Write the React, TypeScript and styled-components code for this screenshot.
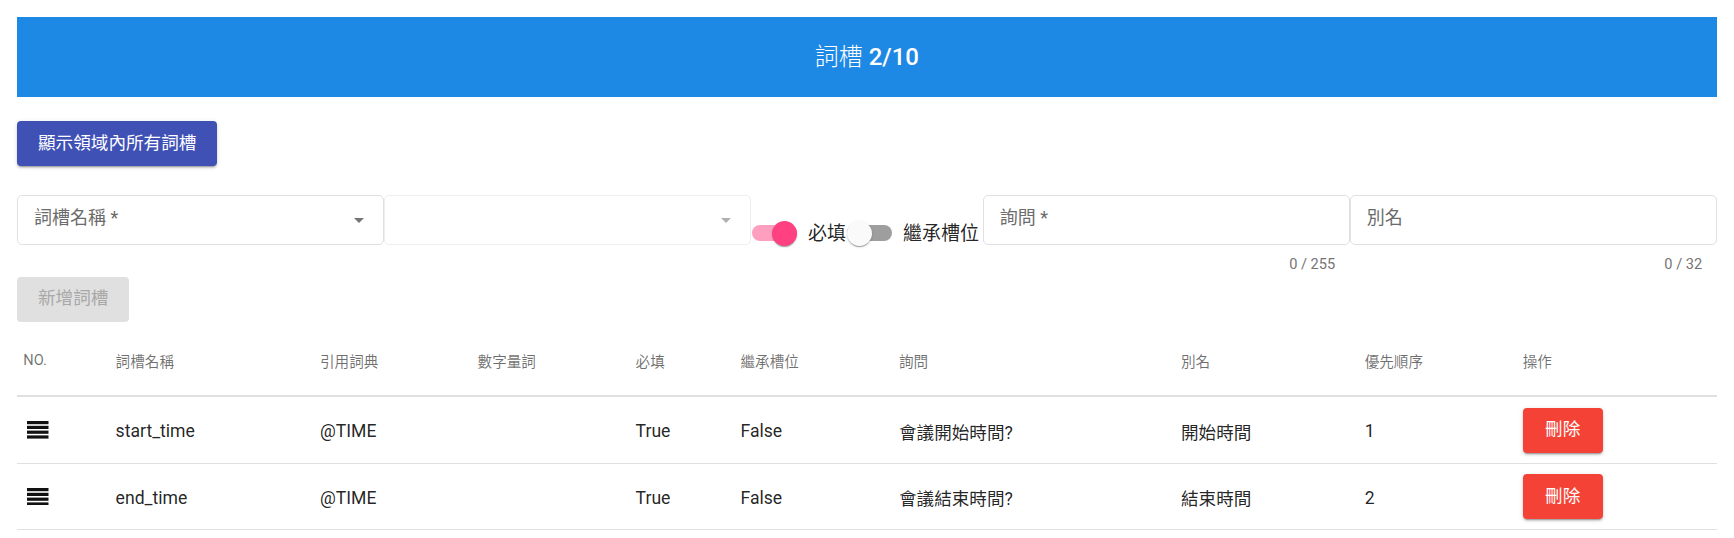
import React from "react";
import styled, { createGlobalStyle } from "styled-components";

const GlobalStyle = createGlobalStyle`
  html, body { margin: 0; padding: 0; background: #fff; }
  body {
    font-family: Roboto, "Noto Sans CJK TC", sans-serif;
    color: rgba(0, 0, 0, 0.87);
    -webkit-font-smoothing: antialiased;
  }
  * { box-sizing: border-box; }
`;

const Page = styled.div`
  padding: 17px 17.3px 0 17px;
`;

const TitleBar = styled.header`
  height: 80px;
  background: #1e88e5;
  color: #fff;
  display: flex;
  align-items: center;
  justify-content: center;
  font-size: 24px;
  line-height: 1;
`;

const TitleText = styled.h1`
  margin: 0;
  font-size: inherit;
  font-weight: 300;
  white-space: pre;
`;

const TitleCount = styled.span`
  font-weight: 500;
`;

const ActionsRow = styled.div`
  display: flex;
  margin-top: 24px;
`;

type Tone = "primary" | "danger" | "disabled";

const Button = styled.button<{ $tone: Tone }>`
  height: 45px;
  padding: 0 ${(p) => (p.$tone === "danger" ? "22.4px" : "21px")};
  border: none;
  border-radius: 4px;
  font-family: inherit;
  font-size: 17.6px;
  line-height: 1;
  display: inline-flex;
  align-items: center;
  justify-content: center;
  flex: none;
  cursor: ${(p) => (p.$tone === "disabled" ? "default" : "pointer")};
  background: ${(p) =>
    p.$tone === "primary" ? "#3f51b5" : p.$tone === "danger" ? "#f44336" : "#e0e0e0"};
  color: ${(p) => (p.$tone === "disabled" ? "#a8a8a8" : "#fff")};
  box-shadow: ${(p) =>
    p.$tone === "disabled"
      ? "none"
      : "0 3px 1px -2px rgba(0,0,0,.2), 0 2px 2px 0 rgba(0,0,0,.14), 0 1px 5px 0 rgba(0,0,0,.12)"};
`;

const FormRow = styled.div`
  display: flex;
  align-items: flex-start;
  margin-top: 29px;
`;

const FieldWrap = styled.div`
  width: 367px;
  flex: none;
  display: flex;
  flex-direction: column;
`;

const FieldBox = styled.div<{ $muted?: boolean }>`
  height: 49.5px;
  border: 1px solid ${(p) => (p.$muted ? "#eeeeee" : "#e0e0e0")};
  border-radius: 5px;
  display: flex;
  align-items: flex-start;
  padding: 9.5px 0 0 16px;
  background: #fff;
`;

const FieldLabel = styled.span`
  flex: 1;
  font-size: 18px;
  line-height: 24px;
  color: #6b6b6b;
`;

const ArrowIcon = styled.svg<{ $muted?: boolean }>`
  width: 10px;
  height: 5px;
  margin: 12px 18.7px 0 0;
  flex: none;
  fill: ${(p) => (p.$muted ? "#b0b0b0" : "#757575")};
`;

const Counter = styled.div`
  margin-top: 10px;
  font-size: 14.6px;
  line-height: 18px;
  text-align: right;
  padding-right: 14.5px;
  color: #757575;
`;

const SwitchGroup = styled.div`
  flex: 1;
  display: flex;
  align-items: center;
  margin-top: 25.7px;
  padding-left: 1px;
`;

const SwitchTrack = styled.div<{ $on: boolean }>`
  width: 45px;
  height: 16px;
  border-radius: 8px;
  flex: none;
  display: flex;
  align-items: center;
  justify-content: ${(p) => (p.$on ? "flex-end" : "flex-start")};
  background: ${(p) => (p.$on ? "#ff9fc0" : "#9e9e9e")};
`;

const SwitchThumb = styled.div<{ $on: boolean }>`
  width: 25px;
  height: 25px;
  border-radius: 50%;
  flex: none;
  background: ${(p) => (p.$on ? "#ff4081" : "#fafafa")};
  box-shadow: 0 2px 1px -1px rgba(0,0,0,.2), 0 1px 1px 0 rgba(0,0,0,.14), 0 1px 3px 0 rgba(0,0,0,.12);
`;

const SwitchLabel = styled.span`
  font-size: 19px;
  line-height: 25px;
  margin: 0 1px 0 11px;
  color: rgba(0, 0, 0, 0.87);
  white-space: nowrap;
`;

const AddRow = styled.div`
  display: flex;
  margin-top: 4.2px;
`;

const Table = styled.div`
  margin-top: 9.8px;
`;

const COLUMNS = "92.3px 204.4px 157.6px 158px 104.9px 158.5px 282px 183.7px 158px 1fr";

const HeadRow = styled.div`
  display: grid;
  grid-template-columns: ${COLUMNS};
  align-items: center;
  height: 66px;
  padding-bottom: 6px;
  border-bottom: 2px solid #e0e0e0;
`;

const BodyRow = styled.div`
  display: grid;
  grid-template-columns: ${COLUMNS};
  align-items: center;
  height: 66.4px;
  padding-top: 2px;
  border-bottom: 1px solid #e0e0e0;
`;

const HeadCell = styled.div`
  padding-left: 6.3px;
  font-size: 14.6px;
  font-weight: 400;
  color: rgba(0, 0, 0, 0.56);
  white-space: nowrap;
`;

const Cell = styled.div`
  padding-left: 6.3px;
  font-size: 17.6px;
  color: rgba(0, 0, 0, 0.87);
  white-space: nowrap;
  display: flex;
  align-items: center;
`;

const ActionCell = styled(Cell)`
  margin-top: -2px;
`;

const ReorderIcon = styled.svg`
  width: 21.5px;
  height: 17.6px;
  margin: -2px 0 0 4.2px;
  fill: #111;
  display: block;
`;

const Arrow = ({ muted }: { muted?: boolean }) => (
  <ArrowIcon $muted={muted} viewBox="7 10 10 5">
    <path d="M7 10l5 5 5-5z" />
  </ArrowIcon>
);

const Switch = ({ on, label }: { on: boolean; label: string }) => (
  <>
    <SwitchTrack $on={on}>
      <SwitchThumb $on={on} />
    </SwitchTrack>
    <SwitchLabel>{label}</SwitchLabel>
  </>
);

const Reorder = () => (
  <ReorderIcon viewBox="0 0 21.5 17.6">
    <rect x="0" y="0" width="21.5" height="3.2" />
    <rect x="0" y="4.8" width="21.5" height="3.2" />
    <rect x="0" y="9.6" width="21.5" height="3.2" />
    <rect x="0" y="14.4" width="21.5" height="3.2" />
  </ReorderIcon>
);

const headers = ["NO.", "詞槽名稱", "引用詞典", "數字量詞", "必填", "繼承槽位", "詢問", "別名", "優先順序", "操作"];

const rows = [
  { name: "start_time", dict: "@TIME", num: "", required: "True", inherit: "False", ask: "會議開始時間?", alias: "開始時間", order: "1" },
  { name: "end_time", dict: "@TIME", num: "", required: "True", inherit: "False", ask: "會議結束時間?", alias: "結束時間", order: "2" },
];

export default function App() {
  return (
    <>
      <GlobalStyle />
      <Page>
        <TitleBar>
          <TitleText>
            {"詞槽 "}
            <TitleCount>2/10</TitleCount>
          </TitleText>
        </TitleBar>

        <ActionsRow>
          <Button $tone="primary">顯示領域內所有詞槽</Button>
        </ActionsRow>

        <FormRow>
          <FieldWrap>
            <FieldBox>
              <FieldLabel>詞槽名稱 *</FieldLabel>
              <Arrow />
            </FieldBox>
          </FieldWrap>
          <FieldWrap>
            <FieldBox $muted>
              <FieldLabel />
              <Arrow muted />
            </FieldBox>
          </FieldWrap>
          <SwitchGroup>
            <Switch on label="必填" />
            <Switch on={false} label="繼承槽位" />
          </SwitchGroup>
          <FieldWrap>
            <FieldBox>
              <FieldLabel>詢問 *</FieldLabel>
            </FieldBox>
            <Counter>0 / 255</Counter>
          </FieldWrap>
          <FieldWrap>
            <FieldBox>
              <FieldLabel>別名</FieldLabel>
            </FieldBox>
            <Counter>0 / 32</Counter>
          </FieldWrap>
        </FormRow>

        <AddRow>
          <Button $tone="disabled" disabled>新增詞槽</Button>
        </AddRow>

        <Table>
          <HeadRow>
            {headers.map((h) => (
              <HeadCell key={h}>{h}</HeadCell>
            ))}
          </HeadRow>
          {rows.map((r) => (
            <BodyRow key={r.name}>
              <Cell>
                <Reorder />
              </Cell>
              <Cell>{r.name}</Cell>
              <Cell>{r.dict}</Cell>
              <Cell>{r.num}</Cell>
              <Cell>{r.required}</Cell>
              <Cell>{r.inherit}</Cell>
              <Cell>{r.ask}</Cell>
              <Cell>{r.alias}</Cell>
              <Cell>{r.order}</Cell>
              <ActionCell>
                <Button $tone="danger">刪除</Button>
              </ActionCell>
            </BodyRow>
          ))}
        </Table>
      </Page>
    </>
  );
}
